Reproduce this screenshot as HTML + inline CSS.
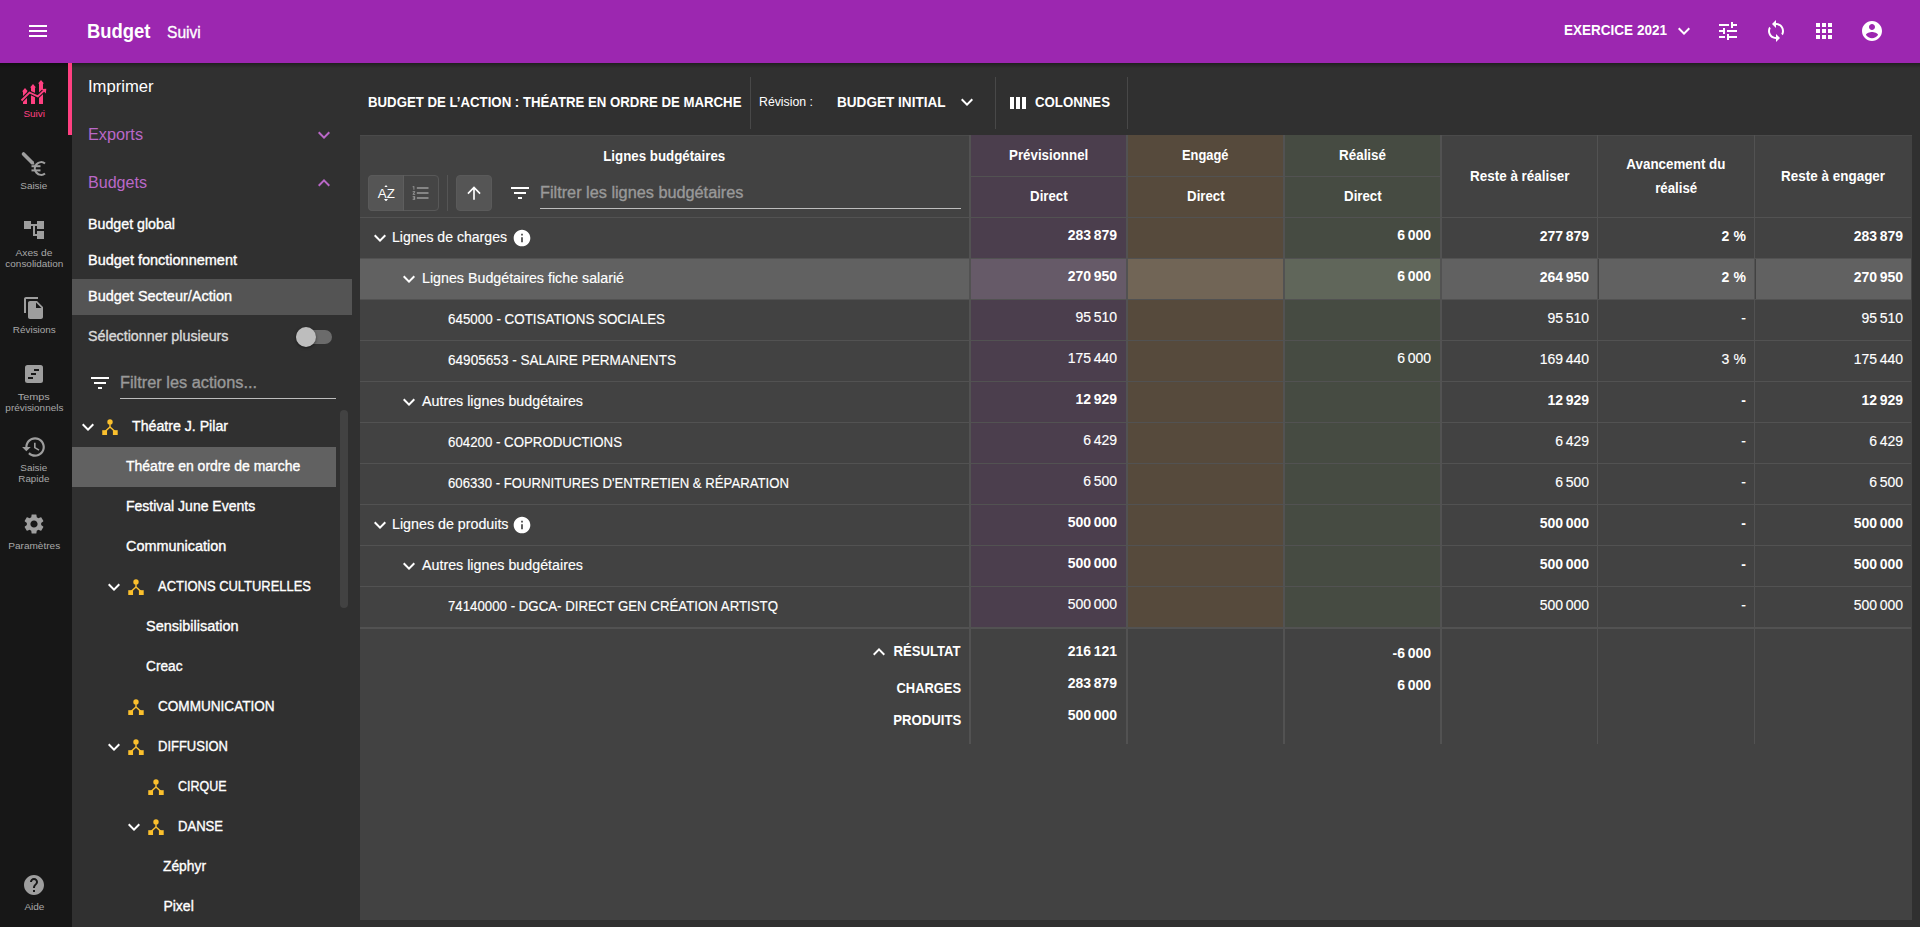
<!DOCTYPE html>
<html><head><meta charset="utf-8"><title>Budget Suivi</title>
<style>
html,body{margin:0;padding:0;width:1920px;height:927px;overflow:hidden;background:#303030;font-family:'Liberation Sans', sans-serif;}
div,svg{box-sizing:content-box}
</style></head><body>
<div style="position:relative;width:1920px;height:927px;overflow:hidden">
<div style="position:absolute;left:0px;top:0px;width:1920px;height:927px;background:#303030;"></div><div style="position:absolute;left:72px;top:62px;width:1848px;height:865px;background:#303030;"></div><div style="position:absolute;left:0px;top:62px;width:72px;height:865px;background:#171717;"></div><div style="position:absolute;left:0px;top:0px;width:1920px;height:63px;background:#9c27b0;"></div><div style="position:absolute;left:0px;top:63px;width:1920px;height:5px;background:linear-gradient(rgba(0,0,0,.35),rgba(0,0,0,0));"></div><div style="position:absolute;left:68px;top:63px;width:4px;height:72px;background:#ff4081;"></div><svg style="position:absolute;left:20px;top:78px;" width="28" height="28" viewBox="20 78 28 28" fill="#ff4081"><g fill="#ff4081"><path d="M22 91.5 L25 88 L28 91.5 L27 91.5 L27 104 L23 104 L23 91.5 Z"/><path d="M30 87.5 L33 84 L36 87.5 L35 87.5 L35 104 L31 104 L31 87.5 Z"/><path d="M38 83.5 L41 80 L44 83.5 L43 83.5 L43 104 L39 104 L39 83.5 Z"/></g><path d="M21.5 100.5 L29.5 92.5 L37.8 96.4 L44 90.5" stroke="#171717" stroke-width="4" fill="none" stroke-linejoin="round"/><path d="M21.5 100.5 L29.5 92.5 L37.8 96.4 L44 90.5" stroke="#ff4081" stroke-width="1.8" fill="none"/><path d="M41.5 89 L46.3 88.8 L45.8 93.5 Z" fill="#ff4081"/></svg><svg style="position:absolute;left:20px;top:150px;" width="28" height="28" viewBox="20 150 28 28" fill="#9e9e9e"><path d="M23.5 154 L32 162.5" stroke="#9e9e9e" stroke-width="3.6" stroke-linecap="round" fill="none"/><path d="M30.6 163.9 L33.4 161.1 L34.6 164.8 Z" fill="#9e9e9e"/><path d="M45 163.5 A6.3 6.3 0 1 0 45 173.5" stroke="#9e9e9e" stroke-width="2.2" fill="none"/><rect x="31.5" y="165.2" width="9" height="2"/><rect x="31.5" y="169.4" width="9" height="2"/></svg><svg style="position:absolute;left:22px;top:218px;" width="24" height="24" viewBox="0 0 24 24" fill="#9e9e9e"><path d="M22 11V3h-7v3H9V3H2v8h7V8h2v10h4v3h7v-8h-7v3h-2V8h2v3z"/></svg><svg style="position:absolute;left:22px;top:296px;" width="24" height="24" viewBox="0 0 24 24" fill="#9e9e9e"><path d="M16 1H4c-1.1 0-2 .9-2 2v14h2V3h12V1zm-1 4l6 6v10c0 1.1-.9 2-2 2H7.99C6.89 23 6 22.1 6 21l.01-14c0-1.1.89-2 1.99-2h7zm-1 7h5.5L14 6.5V12z"/></svg><svg style="position:absolute;left:22px;top:362px;" width="24" height="24" viewBox="0 0 24 24" fill="#9e9e9e"><rect x="3" y="3" width="18" height="18" rx="2.5" fill="#9e9e9e"/><rect x="12" y="7" width="5" height="2" fill="#171717"/><rect x="9" y="11" width="5" height="2" fill="#171717"/><rect x="6" y="15" width="5" height="2" fill="#171717"/></svg><svg style="position:absolute;left:21px;top:434px;" width="26" height="26" viewBox="0 0 24 24" fill="#9e9e9e"><path d="M13 3c-4.97 0-9 4.03-9 9H1l3.89 3.89.07.14L9 12H6c0-3.870 3.13-7 7-7s7 3.13 7 7-3.13 7-7 7c-1.93 0-3.68-.79-4.94-2.06l-1.42 1.42C8.27 19.99 10.51 21 13 21c4.97 0 9-4.03 9-9s-4.03-9-9-9zm-1 5v5l4.28 2.54.72-1.21-3.5-2.08V8H12z"/></svg><svg style="position:absolute;left:22px;top:512px;" width="24" height="24" viewBox="0 0 24 24" fill="#9e9e9e"><path d="M19.14 12.94c.04-.3.06-.61.06-.94 0-.32-.02-.64-.07-.94l2.03-1.58c.18-.14.23-.41.12-.61l-1.92-3.32c-.12-.22-.37-.29-.59-.22l-2.39.96c-.5-.38-1.03-.7-1.62-.94l-.36-2.54c-.04-.24-.24-.41-.48-.41h-3.84c-.24 0-.43.17-.47.41l-.36 2.54c-.59.24-1.13.57-1.62.94l-2.39-.96c-.22-.08-.47 0-.59.22L2.74 8.87c-.12.21-.08.47.12.61l2.03 1.58c-.05.3-.09.63-.09.94s.02.64.07.94l-2.03 1.58c-.18.14-.23.41-.12.61l1.92 3.32c.12.22.37.29.59.22l2.39-.96c.5.38 1.03.7 1.62.94l.36 2.54c.05.24.24.41.48.41h3.84c.24 0 .44-.17.47-.41l.36-2.54c.59-.24 1.13-.56 1.62-.94l2.39.96c.22.08.47 0 .59-.22l1.92-3.32c.12-.22.07-.47-.12-.61l-2.01-1.58zM12 15.6c-1.98 0-3.6-1.62-3.6-3.6s1.62-3.6 3.6-3.6 3.6 1.62 3.6 3.6-1.62 3.6-3.6 3.6z"/></svg><svg style="position:absolute;left:22px;top:873px;" width="24" height="24" viewBox="0 0 24 24" fill="#9e9e9e"><path d="M12 2C6.48 2 2 6.48 2 12s4.48 10 10 10 10-4.48 10-10S17.52 2 12 2zm1 17h-2v-2h2v2zm2.07-7.75l-.9.92C13.45 12.9 13 13.5 13 15h-2v-.5c0-1.1.45-2.1 1.17-2.83l1.24-1.26c.37-.36.59-.86.59-1.41 0-1.1-.9-2-2-2s-2 .9-2 2H8c0-2.21 1.79-4 4-4s4 1.790 4 4c0 .88-.36 1.68-.93 2.25z"/></svg><svg style="position:absolute;left:312px;top:123px;" width="24" height="24" viewBox="0 0 24 24" fill="#ba68c8"><path d="M16.59 8.59L12 13.17 7.41 8.59 6 10l6 6 6-6z"/></svg><svg style="position:absolute;left:312px;top:171px;" width="24" height="24" viewBox="0 0 24 24" fill="#ba68c8"><path d="M12 8l-6 6 1.41 1.41L12 10.83l4.59 4.58L18 14z"/></svg><div style="position:absolute;left:72px;top:279px;width:280px;height:36px;background:#545454;"></div><div style="position:absolute;left:296px;top:330px;width:36px;height:14px;background:#6b6b6b;border-radius:7px"></div><div style="position:absolute;left:295.5px;top:327px;width:20px;height:20px;background:#bdbdbd;border-radius:50%;box-shadow:0 1px 3px rgba(0,0,0,.5)"></div><svg style="position:absolute;left:88px;top:371px;" width="24" height="24" viewBox="0 0 24 24" fill="#fff"><path d="M10 18h4v-2h-4v2zM3 6v2h18V6H3zm3 7h12v-2H6v2z"/></svg><div style="position:absolute;left:120px;top:398px;width:216px;height:1px;background:#bdbdbd;"></div><div style="position:absolute;left:340px;top:410px;width:8px;height:198px;background:#424242;border-radius:4px"></div><svg style="position:absolute;left:76px;top:415px;" width="24" height="24" viewBox="0 0 24 24" fill="#fff"><path d="M16.59 8.59L12 13.17 7.41 8.59 6 10l6 6 6-6z"/></svg><svg style="position:absolute;left:101px;top:417px;" width="18" height="19" viewBox="0 0 18 19" fill="#fbc02d"><circle cx="9" cy="4.9" r="2.7"/><rect x="8.3" y="5" width="1.4" height="5.5"/><path d="M9 10 L4 14.5 M9 10 L14 14.5" stroke="#fbc02d" stroke-width="1.5" fill="none"/><rect x="1.25" y="13.2" width="4.8" height="4.8"/><rect x="11.9" y="13.2" width="4.8" height="4.8"/></svg><div style="position:absolute;left:72px;top:447px;width:264px;height:40px;background:#616161;"></div><svg style="position:absolute;left:102px;top:575px;" width="24" height="24" viewBox="0 0 24 24" fill="#fff"><path d="M16.59 8.59L12 13.17 7.41 8.59 6 10l6 6 6-6z"/></svg><svg style="position:absolute;left:127px;top:577px;" width="18" height="19" viewBox="0 0 18 19" fill="#fbc02d"><circle cx="9" cy="4.9" r="2.7"/><rect x="8.3" y="5" width="1.4" height="5.5"/><path d="M9 10 L4 14.5 M9 10 L14 14.5" stroke="#fbc02d" stroke-width="1.5" fill="none"/><rect x="1.25" y="13.2" width="4.8" height="4.8"/><rect x="11.9" y="13.2" width="4.8" height="4.8"/></svg><svg style="position:absolute;left:127px;top:697px;" width="18" height="19" viewBox="0 0 18 19" fill="#fbc02d"><circle cx="9" cy="4.9" r="2.7"/><rect x="8.3" y="5" width="1.4" height="5.5"/><path d="M9 10 L4 14.5 M9 10 L14 14.5" stroke="#fbc02d" stroke-width="1.5" fill="none"/><rect x="1.25" y="13.2" width="4.8" height="4.8"/><rect x="11.9" y="13.2" width="4.8" height="4.8"/></svg><svg style="position:absolute;left:102px;top:735px;" width="24" height="24" viewBox="0 0 24 24" fill="#fff"><path d="M16.59 8.59L12 13.17 7.41 8.59 6 10l6 6 6-6z"/></svg><svg style="position:absolute;left:127px;top:737px;" width="18" height="19" viewBox="0 0 18 19" fill="#fbc02d"><circle cx="9" cy="4.9" r="2.7"/><rect x="8.3" y="5" width="1.4" height="5.5"/><path d="M9 10 L4 14.5 M9 10 L14 14.5" stroke="#fbc02d" stroke-width="1.5" fill="none"/><rect x="1.25" y="13.2" width="4.8" height="4.8"/><rect x="11.9" y="13.2" width="4.8" height="4.8"/></svg><svg style="position:absolute;left:147px;top:777px;" width="18" height="19" viewBox="0 0 18 19" fill="#fbc02d"><circle cx="9" cy="4.9" r="2.7"/><rect x="8.3" y="5" width="1.4" height="5.5"/><path d="M9 10 L4 14.5 M9 10 L14 14.5" stroke="#fbc02d" stroke-width="1.5" fill="none"/><rect x="1.25" y="13.2" width="4.8" height="4.8"/><rect x="11.9" y="13.2" width="4.8" height="4.8"/></svg><svg style="position:absolute;left:122px;top:815px;" width="24" height="24" viewBox="0 0 24 24" fill="#fff"><path d="M16.59 8.59L12 13.17 7.41 8.59 6 10l6 6 6-6z"/></svg><svg style="position:absolute;left:147px;top:817px;" width="18" height="19" viewBox="0 0 18 19" fill="#fbc02d"><circle cx="9" cy="4.9" r="2.7"/><rect x="8.3" y="5" width="1.4" height="5.5"/><path d="M9 10 L4 14.5 M9 10 L14 14.5" stroke="#fbc02d" stroke-width="1.5" fill="none"/><rect x="1.25" y="13.2" width="4.8" height="4.8"/><rect x="11.9" y="13.2" width="4.8" height="4.8"/></svg><div style="position:absolute;left:750px;top:77px;width:1px;height:52px;background:#484848;"></div><svg style="position:absolute;left:955px;top:90px;" width="24" height="24" viewBox="0 0 24 24" fill="#fff"><path d="M16.59 8.59L12 13.17 7.41 8.59 6 10l6 6 6-6z"/></svg><div style="position:absolute;left:995px;top:77px;width:1px;height:52px;background:#484848;"></div><svg style="position:absolute;left:1010px;top:97px;" width="16" height="12" viewBox="0 0 16 12" fill="#fff"><rect x="0" y="0" width="4" height="12"/><rect x="6" y="0" width="4" height="12"/><rect x="12" y="0" width="4" height="12"/></svg><div style="position:absolute;left:1127px;top:77px;width:1px;height:52px;background:#484848;"></div><div style="position:absolute;left:360px;top:135px;width:1552px;height:785px;background:#424242;"></div><div style="position:absolute;left:360px;top:135px;width:1552px;height:1px;background:#4a4a4a;"></div><div style="position:absolute;left:971px;top:135px;width:155px;height:82px;background:#4b3e4d;"></div><div style="position:absolute;left:1128px;top:135px;width:155px;height:82px;background:#564a3c;"></div><div style="position:absolute;left:1285px;top:135px;width:155px;height:82px;background:#464b42;"></div><div style="position:absolute;left:971px;top:218px;width:155px;height:40px;background:#4b3e4d;"></div><div style="position:absolute;left:1128px;top:218px;width:155px;height:40px;background:#564a3c;"></div><div style="position:absolute;left:1285px;top:218px;width:155px;height:40px;background:#464b42;"></div><div style="position:absolute;left:360px;top:259px;width:609px;height:40px;background:#616161;"></div><div style="position:absolute;left:971px;top:259px;width:155px;height:40px;background:#665a68;"></div><div style="position:absolute;left:1128px;top:259px;width:155px;height:40px;background:#716556;"></div><div style="position:absolute;left:1285px;top:259px;width:155px;height:40px;background:#60665a;"></div><div style="position:absolute;left:1442px;top:259px;width:155px;height:40px;background:#616161;"></div><div style="position:absolute;left:1599px;top:259px;width:155px;height:40px;background:#616161;"></div><div style="position:absolute;left:1756px;top:259px;width:155px;height:40px;background:#616161;"></div><div style="position:absolute;left:971px;top:300px;width:155px;height:40px;background:#4b3e4d;"></div><div style="position:absolute;left:1128px;top:300px;width:155px;height:40px;background:#564a3c;"></div><div style="position:absolute;left:1285px;top:300px;width:155px;height:40px;background:#464b42;"></div><div style="position:absolute;left:971px;top:341px;width:155px;height:40px;background:#4b3e4d;"></div><div style="position:absolute;left:1128px;top:341px;width:155px;height:40px;background:#564a3c;"></div><div style="position:absolute;left:1285px;top:341px;width:155px;height:40px;background:#464b42;"></div><div style="position:absolute;left:971px;top:382px;width:155px;height:40px;background:#4b3e4d;"></div><div style="position:absolute;left:1128px;top:382px;width:155px;height:40px;background:#564a3c;"></div><div style="position:absolute;left:1285px;top:382px;width:155px;height:40px;background:#464b42;"></div><div style="position:absolute;left:971px;top:423px;width:155px;height:40px;background:#4b3e4d;"></div><div style="position:absolute;left:1128px;top:423px;width:155px;height:40px;background:#564a3c;"></div><div style="position:absolute;left:1285px;top:423px;width:155px;height:40px;background:#464b42;"></div><div style="position:absolute;left:971px;top:464px;width:155px;height:40px;background:#4b3e4d;"></div><div style="position:absolute;left:1128px;top:464px;width:155px;height:40px;background:#564a3c;"></div><div style="position:absolute;left:1285px;top:464px;width:155px;height:40px;background:#464b42;"></div><div style="position:absolute;left:971px;top:505px;width:155px;height:40px;background:#4b3e4d;"></div><div style="position:absolute;left:1128px;top:505px;width:155px;height:40px;background:#564a3c;"></div><div style="position:absolute;left:1285px;top:505px;width:155px;height:40px;background:#464b42;"></div><div style="position:absolute;left:971px;top:546px;width:155px;height:40px;background:#4b3e4d;"></div><div style="position:absolute;left:1128px;top:546px;width:155px;height:40px;background:#564a3c;"></div><div style="position:absolute;left:1285px;top:546px;width:155px;height:40px;background:#464b42;"></div><div style="position:absolute;left:971px;top:587px;width:155px;height:40px;background:#4b3e4d;"></div><div style="position:absolute;left:1128px;top:587px;width:155px;height:40px;background:#564a3c;"></div><div style="position:absolute;left:1285px;top:587px;width:155px;height:40px;background:#464b42;"></div><div style="position:absolute;left:971px;top:176px;width:469px;height:1px;background:#525252;"></div><div style="position:absolute;left:360px;top:217px;width:1551px;height:1px;background:#525252;"></div><div style="position:absolute;left:360px;top:258px;width:1551px;height:1px;background:#525252;"></div><div style="position:absolute;left:360px;top:299px;width:1551px;height:1px;background:#525252;"></div><div style="position:absolute;left:360px;top:340px;width:1551px;height:1px;background:#525252;"></div><div style="position:absolute;left:360px;top:381px;width:1551px;height:1px;background:#525252;"></div><div style="position:absolute;left:360px;top:422px;width:1551px;height:1px;background:#525252;"></div><div style="position:absolute;left:360px;top:463px;width:1551px;height:1px;background:#525252;"></div><div style="position:absolute;left:360px;top:504px;width:1551px;height:1px;background:#525252;"></div><div style="position:absolute;left:360px;top:545px;width:1551px;height:1px;background:#525252;"></div><div style="position:absolute;left:360px;top:586px;width:1551px;height:1px;background:#525252;"></div><div style="position:absolute;left:360px;top:627px;width:1551px;height:2px;background:#525252;"></div><div style="position:absolute;left:969px;top:135px;width:2px;height:609px;background:#525252;"></div><div style="position:absolute;left:1126px;top:135px;width:2px;height:609px;background:#525252;"></div><div style="position:absolute;left:1283px;top:135px;width:2px;height:609px;background:#525252;"></div><div style="position:absolute;left:1440px;top:135px;width:2px;height:609px;background:#525252;"></div><div style="position:absolute;left:1597px;top:135px;width:1px;height:609px;background:#525252;"></div><div style="position:absolute;left:1754px;top:135px;width:1px;height:609px;background:#525252;"></div><div style="position:absolute;left:368px;top:175px;width:71px;height:36px;background:#454545;border:1px solid #585858;box-sizing:border-box;border-radius:4px"></div><div style="position:absolute;left:368px;top:175px;width:36px;height:36px;background:#555555;border-radius:4px 0 0 4px;border:1px solid #5a5a5a;box-sizing:border-box"></div><div style="position:absolute;left:403px;top:175px;width:1px;height:36px;background:#5e5e5e;"></div><svg style="position:absolute;left:384px;top:184.5px;" width="4" height="2.5" viewBox="0 0 4 2.5" fill="#fff"><path d="M0 2.5 L2 0 L4 2.5 Z"/></svg><svg style="position:absolute;left:384px;top:198.7px;" width="4" height="2.5" viewBox="0 0 4 2.5" fill="#fff"><path d="M0 0 L2 2.5 L4 0 Z"/></svg><svg style="position:absolute;left:411px;top:183px;" width="20" height="20" viewBox="0 0 24 24" fill="#9a9a9a"><path d="M2 17h2v.5H3v1h1v.5H2v1h3v-4H2v1zm1-9h1V4H2v1h1v3zm-1 3h1.8L2 13.1v.9h3v-1H3.2L5 10.9V10H2v1zm5-6v2h14V5H7zm0 14h14v-2H7v2zm0-6h14v-2H7v2z"/></svg><div style="position:absolute;left:447px;top:175px;width:1px;height:36px;background:#555;"></div><div style="position:absolute;left:456px;top:175px;width:36px;height:36px;background:#555555;border-radius:4px;border:1px solid #5a5a5a;box-sizing:border-box"></div><svg style="position:absolute;left:464px;top:182.7px;" width="20" height="20" viewBox="0 0 24 24" fill="#fff"><path d="M4 12l1.41 1.41L11 7.830V20h2V7.83l5.58 5.59L20 12l-8-8-8 8z"/></svg><svg style="position:absolute;left:508px;top:181px;" width="24" height="24" viewBox="0 0 24 24" fill="#fff"><path d="M10 18h4v-2h-4v2zM3 6v2h18V6H3zm3 7h12v-2H6v2z"/></svg><div style="position:absolute;left:540px;top:208px;width:421px;height:1px;background:#bdbdbd;"></div><svg style="position:absolute;left:368px;top:226px;" width="24" height="24" viewBox="0 0 24 24" fill="#fff"><path d="M16.59 8.59L12 13.17 7.41 8.59 6 10l6 6 6-6z"/></svg><svg style="position:absolute;left:512px;top:228px;" width="20" height="20" viewBox="0 0 24 24" fill="#fff"><path d="M12 2C6.48 2 2 6.48 2 12s4.48 10 10 10 10-4.48 10-10S17.52 2 12 2zm1 15h-2v-6h2v6zm0-8h-2V7h2v2z"/></svg><svg style="position:absolute;left:397px;top:267px;" width="24" height="24" viewBox="0 0 24 24" fill="#fff"><path d="M16.59 8.59L12 13.17 7.41 8.59 6 10l6 6 6-6z"/></svg><svg style="position:absolute;left:397px;top:390px;" width="24" height="24" viewBox="0 0 24 24" fill="#fff"><path d="M16.59 8.59L12 13.17 7.41 8.59 6 10l6 6 6-6z"/></svg><svg style="position:absolute;left:368px;top:513px;" width="24" height="24" viewBox="0 0 24 24" fill="#fff"><path d="M16.59 8.59L12 13.17 7.41 8.59 6 10l6 6 6-6z"/></svg><svg style="position:absolute;left:512px;top:515px;" width="20" height="20" viewBox="0 0 24 24" fill="#fff"><path d="M12 2C6.48 2 2 6.48 2 12s4.48 10 10 10 10-4.48 10-10S17.52 2 12 2zm1 15h-2v-6h2v6zm0-8h-2V7h2v2z"/></svg><svg style="position:absolute;left:397px;top:554px;" width="24" height="24" viewBox="0 0 24 24" fill="#fff"><path d="M16.59 8.59L12 13.17 7.41 8.59 6 10l6 6 6-6z"/></svg><svg style="position:absolute;left:867px;top:640px;" width="24" height="24" viewBox="0 0 24 24" fill="#fff"><path d="M12 8l-6 6 1.41 1.41L12 10.83l4.59 4.58L18 14z"/></svg>
<div style="font-family:'Liberation Sans', sans-serif;font-size:20px;font-weight:700;letter-spacing:0px;white-space:pre;position:absolute;top:21.07px;line-height:20px;color:#fff;left:86.5px;transform-origin:0 0;transform:scaleX(0.9218);">Budget</div><div style="font-family:'Liberation Sans', sans-serif;font-size:17px;font-weight:400;letter-spacing:0px;white-space:pre;-webkit-text-stroke:0.35px #fff;position:absolute;top:23.61px;line-height:17px;color:#fff;left:167px;transform-origin:0 0;transform:scaleX(0.9170);">Suivi</div><div style="font-family:'Liberation Sans', sans-serif;font-size:14px;font-weight:700;letter-spacing:0px;white-space:pre;position:absolute;top:22.85px;line-height:14px;color:#fff;left:1564px;transform-origin:0 0;transform:scaleX(0.9661);">EXERCICE 2021</div><div style="font-family:'Liberation Sans', sans-serif;font-size:9.4px;font-weight:400;letter-spacing:0px;white-space:pre;position:absolute;top:109.04px;line-height:9.4px;color:#ff4081;left:23.84px;transform-origin:50% 0;transform:scaleX(1.0576);">Suivi</div><div style="font-family:'Liberation Sans', sans-serif;font-size:9.4px;font-weight:400;letter-spacing:0px;white-space:pre;position:absolute;top:181.04px;line-height:9.4px;color:#a8a8a8;left:21.23px;transform-origin:50% 0;transform:scaleX(1.0569);">Saisie</div><div style="font-family:'Liberation Sans', sans-serif;font-size:9.4px;font-weight:400;letter-spacing:0px;white-space:pre;position:absolute;top:248.04px;line-height:9.4px;color:#a8a8a8;left:17.06px;transform-origin:50% 0;transform:scaleX(1.0923);">Axes de</div><div style="font-family:'Liberation Sans', sans-serif;font-size:9.4px;font-weight:400;letter-spacing:0px;white-space:pre;position:absolute;top:259.04px;line-height:9.4px;color:#a8a8a8;left:6.63px;transform-origin:50% 0;transform:scaleX(1.0597);">consolidation</div><div style="font-family:'Liberation Sans', sans-serif;font-size:9.4px;font-weight:400;letter-spacing:0px;white-space:pre;position:absolute;top:325.04px;line-height:9.4px;color:#a8a8a8;left:13.68px;transform-origin:50% 0;transform:scaleX(1.0581);">Révisions</div><div style="font-family:'Liberation Sans', sans-serif;font-size:9.4px;font-weight:400;letter-spacing:0px;white-space:pre;position:absolute;top:392.04px;line-height:9.4px;color:#a8a8a8;left:20.19px;transform-origin:50% 0;transform:scaleX(1.1584);">Temps</div><div style="font-family:'Liberation Sans', sans-serif;font-size:9.4px;font-weight:400;letter-spacing:0px;white-space:pre;position:absolute;top:403.04px;line-height:9.4px;color:#a8a8a8;left:6.64px;transform-origin:50% 0;transform:scaleX(1.0600);">prévisionnels</div><div style="font-family:'Liberation Sans', sans-serif;font-size:9.4px;font-weight:400;letter-spacing:0px;white-space:pre;position:absolute;top:463.04px;line-height:9.4px;color:#a8a8a8;left:21.23px;transform-origin:50% 0;transform:scaleX(1.0569);">Saisie</div><div style="font-family:'Liberation Sans', sans-serif;font-size:9.4px;font-weight:400;letter-spacing:0px;white-space:pre;position:absolute;top:474.04px;line-height:9.4px;color:#a8a8a8;left:19.14px;transform-origin:50% 0;transform:scaleX(1.0431);">Rapide</div><div style="font-family:'Liberation Sans', sans-serif;font-size:9.4px;font-weight:400;letter-spacing:0px;white-space:pre;position:absolute;top:541.04px;line-height:9.4px;color:#a8a8a8;left:9.77px;transform-origin:50% 0;transform:scaleX(1.0729);">Paramètres</div><div style="font-family:'Liberation Sans', sans-serif;font-size:9.4px;font-weight:400;letter-spacing:0px;white-space:pre;position:absolute;top:902.04px;line-height:9.4px;color:#a8a8a8;left:24.62px;transform-origin:50% 0;transform:scaleX(1.0658);">Aide</div><div style="font-family:'Liberation Sans', sans-serif;font-size:16px;font-weight:400;letter-spacing:0px;white-space:pre;position:absolute;top:79.46px;line-height:16px;color:#fff;left:88px;transform-origin:0 0;transform:scaleX(1.0379);">Imprimer</div><div style="font-family:'Liberation Sans', sans-serif;font-size:16px;font-weight:400;letter-spacing:0px;white-space:pre;position:absolute;top:127.46px;line-height:16px;color:#ba68c8;left:88px;transform-origin:0 0;transform:scaleX(1.0138);">Exports</div><div style="font-family:'Liberation Sans', sans-serif;font-size:16px;font-weight:400;letter-spacing:0px;white-space:pre;position:absolute;top:175.46px;line-height:16px;color:#ba68c8;left:88px;transform-origin:0 0;transform:scaleX(1.0048);">Budgets</div><div style="font-family:'Liberation Sans', sans-serif;font-size:14px;font-weight:400;letter-spacing:0px;white-space:pre;-webkit-text-stroke:0.35px #fff;position:absolute;top:217.15px;line-height:14px;color:#fff;left:88px;transform-origin:0 0;transform:scaleX(1.0159);">Budget global</div><div style="font-family:'Liberation Sans', sans-serif;font-size:14px;font-weight:400;letter-spacing:0px;white-space:pre;-webkit-text-stroke:0.35px #fff;position:absolute;top:253.15px;line-height:14px;color:#fff;left:88px;transform-origin:0 0;transform:scaleX(1.0347);">Budget fonctionnement</div><div style="font-family:'Liberation Sans', sans-serif;font-size:14px;font-weight:400;letter-spacing:0px;white-space:pre;-webkit-text-stroke:0.35px #fff;position:absolute;top:289.15px;line-height:14px;color:#fff;left:88px;transform-origin:0 0;transform:scaleX(1.0336);">Budget Secteur/Action</div><div style="font-family:'Liberation Sans', sans-serif;font-size:14px;font-weight:400;letter-spacing:0px;white-space:pre;-webkit-text-stroke:0.35px #d9d9d9;position:absolute;top:329.15px;line-height:14px;color:#d9d9d9;left:88px;transform-origin:0 0;transform:scaleX(1.0200);">Sélectionner plusieurs</div><div style="font-family:'Liberation Sans', sans-serif;font-size:16px;font-weight:400;letter-spacing:0px;white-space:pre;-webkit-text-stroke:0.35px #999999;position:absolute;top:375.46px;line-height:16px;color:#999999;left:120px;transform-origin:0 0;transform:scaleX(1.0204);">Filtrer les actions...</div><div style="font-family:'Liberation Sans', sans-serif;font-size:14px;font-weight:400;letter-spacing:0px;white-space:pre;-webkit-text-stroke:0.35px #fff;position:absolute;top:419.15px;line-height:14px;color:#fff;left:131.5px;transform-origin:0 0;transform:scaleX(1.0112);">Théatre J. Pilar</div><div style="font-family:'Liberation Sans', sans-serif;font-size:14px;font-weight:400;letter-spacing:0px;white-space:pre;-webkit-text-stroke:0.35px #fff;position:absolute;top:459.15px;line-height:14px;color:#fff;left:126px;transform-origin:0 0;">Théatre en ordre de marche</div><div style="font-family:'Liberation Sans', sans-serif;font-size:14px;font-weight:400;letter-spacing:0px;white-space:pre;-webkit-text-stroke:0.35px #fff;position:absolute;top:499.15px;line-height:14px;color:#fff;left:126px;transform-origin:0 0;">Festival June Events</div><div style="font-family:'Liberation Sans', sans-serif;font-size:14px;font-weight:400;letter-spacing:0px;white-space:pre;-webkit-text-stroke:0.35px #fff;position:absolute;top:539.15px;line-height:14px;color:#fff;left:126px;transform-origin:0 0;transform:scaleX(1.0312);">Communication</div><div style="font-family:'Liberation Sans', sans-serif;font-size:14px;font-weight:400;letter-spacing:0px;white-space:pre;-webkit-text-stroke:0.35px #fff;position:absolute;top:579.15px;line-height:14px;color:#fff;left:157.6px;transform-origin:0 0;transform:scaleX(0.9247);">ACTIONS CULTURELLES</div><div style="font-family:'Liberation Sans', sans-serif;font-size:14px;font-weight:400;letter-spacing:0px;white-space:pre;-webkit-text-stroke:0.35px #fff;position:absolute;top:619.15px;line-height:14px;color:#fff;left:146.4px;transform-origin:0 0;transform:scaleX(1.0346);">Sensibilisation</div><div style="font-family:'Liberation Sans', sans-serif;font-size:14px;font-weight:400;letter-spacing:0px;white-space:pre;-webkit-text-stroke:0.35px #fff;position:absolute;top:659.15px;line-height:14px;color:#fff;left:146.4px;transform-origin:0 0;transform:scaleX(0.9770);">Creac</div><div style="font-family:'Liberation Sans', sans-serif;font-size:14px;font-weight:400;letter-spacing:0px;white-space:pre;-webkit-text-stroke:0.35px #fff;position:absolute;top:699.15px;line-height:14px;color:#fff;left:157.8px;transform-origin:0 0;transform:scaleX(0.9693);">COMMUNICATION</div><div style="font-family:'Liberation Sans', sans-serif;font-size:14px;font-weight:400;letter-spacing:0px;white-space:pre;-webkit-text-stroke:0.35px #fff;position:absolute;top:739.15px;line-height:14px;color:#fff;left:157.8px;transform-origin:0 0;transform:scaleX(0.9277);">DIFFUSION</div><div style="font-family:'Liberation Sans', sans-serif;font-size:14px;font-weight:400;letter-spacing:0px;white-space:pre;-webkit-text-stroke:0.35px #fff;position:absolute;top:779.15px;line-height:14px;color:#fff;left:178px;transform-origin:0 0;transform:scaleX(0.8907);">CIRQUE</div><div style="font-family:'Liberation Sans', sans-serif;font-size:14px;font-weight:400;letter-spacing:0px;white-space:pre;-webkit-text-stroke:0.35px #fff;position:absolute;top:819.15px;line-height:14px;color:#fff;left:178px;transform-origin:0 0;transform:scaleX(0.9329);">DANSE</div><div style="font-family:'Liberation Sans', sans-serif;font-size:14px;font-weight:400;letter-spacing:0px;white-space:pre;-webkit-text-stroke:0.35px #fff;position:absolute;top:859.15px;line-height:14px;color:#fff;left:163.4px;transform-origin:0 0;transform:scaleX(0.9867);">Zéphyr</div><div style="font-family:'Liberation Sans', sans-serif;font-size:14px;font-weight:400;letter-spacing:0px;white-space:pre;-webkit-text-stroke:0.35px #fff;position:absolute;top:899.15px;line-height:14px;color:#fff;left:163.4px;transform-origin:0 0;">Pixel</div><div style="font-family:'Liberation Sans', sans-serif;font-size:14px;font-weight:700;letter-spacing:0px;white-space:pre;position:absolute;top:94.65px;line-height:14px;color:#fff;left:368px;transform-origin:0 0;transform:scaleX(0.9440);">BUDGET DE L’ACTION : THÉATRE EN ORDRE DE MARCHE</div><div style="font-family:'Liberation Sans', sans-serif;font-size:12px;font-weight:400;letter-spacing:0px;white-space:pre;position:absolute;top:95.84px;line-height:12px;color:#fff;left:759px;transform-origin:0 0;transform:scaleX(1.0249);">Révision :</div><div style="font-family:'Liberation Sans', sans-serif;font-size:14px;font-weight:700;letter-spacing:0px;white-space:pre;position:absolute;top:94.65px;line-height:14px;color:#fff;left:837.4px;transform-origin:0 0;transform:scaleX(0.9696);">BUDGET INITIAL</div><div style="font-family:'Liberation Sans', sans-serif;font-size:14px;font-weight:700;letter-spacing:0px;white-space:pre;position:absolute;top:94.65px;line-height:14px;color:#fff;left:1035px;transform-origin:0 0;transform:scaleX(0.9453);">COLONNES</div><div style="font-family:'Liberation Sans', sans-serif;font-size:14px;font-weight:700;letter-spacing:0px;white-space:pre;position:absolute;top:149.15px;line-height:14px;color:#fff;left:600.32px;transform-origin:50% 0;transform:scaleX(0.9505);">Lignes budgétaires</div><div style="font-family:'Liberation Sans', sans-serif;font-size:14px;font-weight:700;letter-spacing:0px;white-space:pre;position:absolute;top:147.85px;line-height:14px;color:#fff;left:1006.87px;transform-origin:50% 0;transform:scaleX(0.9524);">Prévisionnel</div><div style="font-family:'Liberation Sans', sans-serif;font-size:14px;font-weight:700;letter-spacing:0px;white-space:pre;position:absolute;top:189.15px;line-height:14px;color:#fff;left:1028.66px;transform-origin:50% 0;transform:scaleX(0.9449);">Direct</div><div style="font-family:'Liberation Sans', sans-serif;font-size:14px;font-weight:700;letter-spacing:0px;white-space:pre;position:absolute;top:147.85px;line-height:14px;color:#fff;left:1180.21px;transform-origin:50% 0;transform:scaleX(0.9194);">Engagé</div><div style="font-family:'Liberation Sans', sans-serif;font-size:14px;font-weight:700;letter-spacing:0px;white-space:pre;position:absolute;top:189.15px;line-height:14px;color:#fff;left:1185.66px;transform-origin:50% 0;transform:scaleX(0.9449);">Direct</div><div style="font-family:'Liberation Sans', sans-serif;font-size:14px;font-weight:700;letter-spacing:0px;white-space:pre;position:absolute;top:147.85px;line-height:14px;color:#fff;left:1337.98px;transform-origin:50% 0;transform:scaleX(0.9583);">Réalisé</div><div style="font-family:'Liberation Sans', sans-serif;font-size:14px;font-weight:700;letter-spacing:0px;white-space:pre;position:absolute;top:189.15px;line-height:14px;color:#fff;left:1342.66px;transform-origin:50% 0;transform:scaleX(0.9449);">Direct</div><div style="font-family:'Liberation Sans', sans-serif;font-size:14px;font-weight:700;letter-spacing:0px;white-space:pre;position:absolute;top:168.85px;line-height:14px;color:#fff;left:1467.73px;transform-origin:50% 0;transform:scaleX(0.9611);">Reste à réaliser</div><div style="font-family:'Liberation Sans', sans-serif;font-size:14px;font-weight:700;letter-spacing:0px;white-space:pre;position:absolute;top:157.15px;line-height:14px;color:#fff;left:1624.13px;transform-origin:50% 0;transform:scaleX(0.9544);">Avancement du</div><div style="font-family:'Liberation Sans', sans-serif;font-size:14px;font-weight:700;letter-spacing:0px;white-space:pre;position:absolute;top:180.75px;line-height:14px;color:#fff;left:1653.81px;transform-origin:50% 0;transform:scaleX(0.9465);">réalisé</div><div style="font-family:'Liberation Sans', sans-serif;font-size:14px;font-weight:700;letter-spacing:0px;white-space:pre;position:absolute;top:168.85px;line-height:14px;color:#fff;left:1779.41px;transform-origin:50% 0;transform:scaleX(0.9614);">Reste à engager</div><div style="font-family:'Liberation Sans', sans-serif;font-size:13px;font-weight:400;letter-spacing:0px;white-space:pre;position:absolute;top:187.00px;line-height:13px;color:#fff;left:377.69px;transform-origin:50% 0;transform:scaleX(1.0226);">AZ</div><div style="font-family:'Liberation Sans', sans-serif;font-size:16px;font-weight:400;letter-spacing:0px;white-space:pre;-webkit-text-stroke:0.35px #999999;position:absolute;top:185.16px;line-height:16px;color:#999999;left:540.4px;transform-origin:0 0;transform:scaleX(1.0165);">Filtrer les lignes budgétaires</div><div style="font-family:'Liberation Sans', sans-serif;font-size:14px;font-weight:400;letter-spacing:0px;white-space:pre;-webkit-text-stroke:0.15px #fff;position:absolute;top:230.15px;line-height:14px;color:#fff;left:392px;transform-origin:0 0;transform:scaleX(1.0051);">Lignes de charges</div><div style="font-family:'Liberation Sans', sans-serif;font-size:14px;font-weight:400;letter-spacing:0px;white-space:pre;-webkit-text-stroke:0.15px #fff;position:absolute;top:271.15px;line-height:14px;color:#fff;left:421.5px;transform-origin:0 0;transform:scaleX(1.0178);">Lignes Budgétaires fiche salarié</div><div style="font-family:'Liberation Sans', sans-serif;font-size:14px;font-weight:400;letter-spacing:0px;white-space:pre;-webkit-text-stroke:0.15px #fff;position:absolute;top:312.15px;line-height:14px;color:#fff;left:447.5px;transform-origin:0 0;transform:scaleX(0.9562);">645000 - COTISATIONS SOCIALES</div><div style="font-family:'Liberation Sans', sans-serif;font-size:14px;font-weight:400;letter-spacing:0px;white-space:pre;-webkit-text-stroke:0.15px #fff;position:absolute;top:353.15px;line-height:14px;color:#fff;left:447.5px;transform-origin:0 0;transform:scaleX(0.9702);">64905653 - SALAIRE PERMANENTS</div><div style="font-family:'Liberation Sans', sans-serif;font-size:14px;font-weight:400;letter-spacing:0px;white-space:pre;-webkit-text-stroke:0.15px #fff;position:absolute;top:394.15px;line-height:14px;color:#fff;left:421.5px;transform-origin:0 0;transform:scaleX(1.0190);">Autres lignes budgétaires</div><div style="font-family:'Liberation Sans', sans-serif;font-size:14px;font-weight:400;letter-spacing:0px;white-space:pre;-webkit-text-stroke:0.15px #fff;position:absolute;top:435.15px;line-height:14px;color:#fff;left:447.5px;transform-origin:0 0;transform:scaleX(0.9477);">604200 - COPRODUCTIONS</div><div style="font-family:'Liberation Sans', sans-serif;font-size:14px;font-weight:400;letter-spacing:0px;white-space:pre;-webkit-text-stroke:0.15px #fff;position:absolute;top:476.15px;line-height:14px;color:#fff;left:447.5px;transform-origin:0 0;transform:scaleX(0.9411);">606330 - FOURNITURES D&#x27;ENTRETIEN &amp; RÉPARATION</div><div style="font-family:'Liberation Sans', sans-serif;font-size:14px;font-weight:400;letter-spacing:0px;white-space:pre;-webkit-text-stroke:0.15px #fff;position:absolute;top:517.15px;line-height:14px;color:#fff;left:392px;transform-origin:0 0;transform:scaleX(1.0182);">Lignes de produits</div><div style="font-family:'Liberation Sans', sans-serif;font-size:14px;font-weight:400;letter-spacing:0px;white-space:pre;-webkit-text-stroke:0.15px #fff;position:absolute;top:558.15px;line-height:14px;color:#fff;left:421.5px;transform-origin:0 0;transform:scaleX(1.0190);">Autres lignes budgétaires</div><div style="font-family:'Liberation Sans', sans-serif;font-size:14px;font-weight:400;letter-spacing:0px;white-space:pre;-webkit-text-stroke:0.15px #fff;position:absolute;top:599.15px;line-height:14px;color:#fff;left:447.5px;transform-origin:0 0;transform:scaleX(0.9468);">74140000 - DGCA- DIRECT GEN CRÉATION ARTISTQ</div><div style="font-family:'Liberation Sans', sans-serif;font-size:14px;font-weight:700;letter-spacing:0px;white-space:pre;position:absolute;top:643.85px;line-height:14px;color:#fff;left:889.45px;transform-origin:100% 0;transform:scaleX(0.9364);">RÉSULTAT</div><div style="font-family:'Liberation Sans', sans-serif;font-size:14px;font-weight:700;letter-spacing:0px;white-space:pre;position:absolute;top:681.15px;line-height:14px;color:#fff;left:890.98px;transform-origin:100% 0;transform:scaleX(0.9212);">CHARGES</div><div style="font-family:'Liberation Sans', sans-serif;font-size:14px;font-weight:700;letter-spacing:0px;white-space:pre;position:absolute;top:713.15px;line-height:14px;color:#fff;left:888.66px;transform-origin:100% 0;transform:scaleX(0.9400);">PRODUITS</div>
<div style="position:absolute;left:0;top:0;width:1920px;height:927px;z-index:3"><div style="position:absolute;left:29px;top:25px;width:18px;height:2px;background:#fff"></div><div style="position:absolute;left:29px;top:30px;width:18px;height:2px;background:#fff"></div><div style="position:absolute;left:29px;top:35px;width:18px;height:2px;background:#fff"></div><svg style="position:absolute;left:1672px;top:19px;" width="24" height="24" viewBox="0 0 24 24" fill="#fff"><path d="M16.59 8.59L12 13.17 7.41 8.59 6 10l6 6 6-6z"/></svg><svg style="position:absolute;left:1716px;top:19px;" width="24" height="24" viewBox="0 0 24 24" fill="#fff"><path d="M3 17v2h6v-2H3zM3 5v2h10V5H3zm10 16v-2h8v-2h-8v-2h-2v6h2zM7 9v2H3v2h4v2h2V9H7zm14 4v-2H11v2h10zm-6-4h2V7h4V5h-4V3h-2v6z"/></svg><svg style="position:absolute;left:1764px;top:19px;" width="24" height="24" viewBox="0 0 24 24" fill="#fff"><path d="M12 4V1L8 5l4 4V6c3.31 0 6 2.69 6 6 0 1.010-.25 1.97-.7 2.8l1.46 1.46C19.54 15.03 20 13.57 20 12c0-4.42-3.58-8-8-8zm0 14c-3.31 0-6-2.69-6-6 0-1.01.25-1.97.7-2.8L5.24 7.74C4.46 8.97 4 10.43 4 12c0 4.42 3.58 8 8 8v3l4-4-4-4v3z"/></svg><svg style="position:absolute;left:1812px;top:19px;" width="24" height="24" viewBox="0 0 24 24" fill="#fff"><path d="M4 8h4V4H4v4zm6 12h4v-4h-4v4zm-6 0h4v-4H4v4zm0-6h4v-4H4v4zm6 0h4v-4h-4v4zm6-10v4h4V4h-4zm-6 4h4V4h-4v4zm6 6h4v-4h-4v4zm0 6h4v-4h-4v4z"/></svg><svg style="position:absolute;left:1860px;top:19px;" width="24" height="24" viewBox="0 0 24 24" fill="#fff"><path d="M12 2C6.48 2 2 6.48 2 12s4.48 10 10 10 10-4.48 10-10S17.52 2 12 2zm0 3c1.66 0 3 1.34 3 3s-1.34 3-3 3-3-1.34-3-3 1.34-3 3-3zm0 14.2c-2.5 0-4.71-1.28-6-3.22.03-1.99 4-3.080 6-3.08 1.99 0 5.97 1.09 6 3.08-1.29 1.94-3.5 3.22-6 3.22z"/></svg><div style="position:absolute;right:803px;top:228.15px;line-height:14px;font-size:14px;font-weight:700;color:#fff;white-space:pre;text-align:right;font-family:'Liberation Sans', sans-serif">283<span style="margin-left:2.6px">879</span></div><div style="position:absolute;right:489px;top:228.15px;line-height:14px;font-size:14px;font-weight:700;color:#fff;white-space:pre;text-align:right;font-family:'Liberation Sans', sans-serif">6<span style="margin-left:2.6px">000</span></div><div style="position:absolute;right:331px;top:229.15px;line-height:14px;font-size:14px;font-weight:700;color:#fff;white-space:pre;text-align:right;font-family:'Liberation Sans', sans-serif">277<span style="margin-left:2.6px">879</span></div><div style="position:absolute;right:174px;top:229.15px;line-height:14px;font-size:14px;font-weight:700;color:#fff;white-space:pre;text-align:right;font-family:'Liberation Sans', sans-serif">2<span style="margin-left:4.2px">%</span></div><div style="position:absolute;right:17px;top:229.15px;line-height:14px;font-size:14px;font-weight:700;color:#fff;white-space:pre;text-align:right;font-family:'Liberation Sans', sans-serif">283<span style="margin-left:2.6px">879</span></div><div style="position:absolute;right:803px;top:269.15px;line-height:14px;font-size:14px;font-weight:700;color:#fff;white-space:pre;text-align:right;font-family:'Liberation Sans', sans-serif">270<span style="margin-left:2.6px">950</span></div><div style="position:absolute;right:489px;top:269.15px;line-height:14px;font-size:14px;font-weight:700;color:#fff;white-space:pre;text-align:right;font-family:'Liberation Sans', sans-serif">6<span style="margin-left:2.6px">000</span></div><div style="position:absolute;right:331px;top:270.15px;line-height:14px;font-size:14px;font-weight:700;color:#fff;white-space:pre;text-align:right;font-family:'Liberation Sans', sans-serif">264<span style="margin-left:2.6px">950</span></div><div style="position:absolute;right:174px;top:270.15px;line-height:14px;font-size:14px;font-weight:700;color:#fff;white-space:pre;text-align:right;font-family:'Liberation Sans', sans-serif">2<span style="margin-left:4.2px">%</span></div><div style="position:absolute;right:17px;top:270.15px;line-height:14px;font-size:14px;font-weight:700;color:#fff;white-space:pre;text-align:right;font-family:'Liberation Sans', sans-serif">270<span style="margin-left:2.6px">950</span></div><div style="position:absolute;right:803px;top:310.15px;line-height:14px;font-size:14px;font-weight:400;color:#fff;-webkit-text-stroke:0.15px #fff;white-space:pre;text-align:right;font-family:'Liberation Sans', sans-serif">95<span style="margin-left:2.6px">510</span></div><div style="position:absolute;right:331px;top:311.15px;line-height:14px;font-size:14px;font-weight:400;color:#fff;-webkit-text-stroke:0.15px #fff;white-space:pre;text-align:right;font-family:'Liberation Sans', sans-serif">95<span style="margin-left:2.6px">510</span></div><div style="position:absolute;right:174px;top:311.15px;line-height:14px;font-size:14px;font-weight:400;color:#fff;-webkit-text-stroke:0.15px #fff;white-space:pre;text-align:right;font-family:'Liberation Sans', sans-serif">-</div><div style="position:absolute;right:17px;top:311.15px;line-height:14px;font-size:14px;font-weight:400;color:#fff;-webkit-text-stroke:0.15px #fff;white-space:pre;text-align:right;font-family:'Liberation Sans', sans-serif">95<span style="margin-left:2.6px">510</span></div><div style="position:absolute;right:803px;top:351.15px;line-height:14px;font-size:14px;font-weight:400;color:#fff;-webkit-text-stroke:0.15px #fff;white-space:pre;text-align:right;font-family:'Liberation Sans', sans-serif">175<span style="margin-left:2.6px">440</span></div><div style="position:absolute;right:489px;top:351.15px;line-height:14px;font-size:14px;font-weight:400;color:#fff;-webkit-text-stroke:0.15px #fff;white-space:pre;text-align:right;font-family:'Liberation Sans', sans-serif">6<span style="margin-left:2.6px">000</span></div><div style="position:absolute;right:331px;top:352.15px;line-height:14px;font-size:14px;font-weight:400;color:#fff;-webkit-text-stroke:0.15px #fff;white-space:pre;text-align:right;font-family:'Liberation Sans', sans-serif">169<span style="margin-left:2.6px">440</span></div><div style="position:absolute;right:174px;top:352.15px;line-height:14px;font-size:14px;font-weight:400;color:#fff;-webkit-text-stroke:0.15px #fff;white-space:pre;text-align:right;font-family:'Liberation Sans', sans-serif">3<span style="margin-left:4.2px">%</span></div><div style="position:absolute;right:17px;top:352.15px;line-height:14px;font-size:14px;font-weight:400;color:#fff;-webkit-text-stroke:0.15px #fff;white-space:pre;text-align:right;font-family:'Liberation Sans', sans-serif">175<span style="margin-left:2.6px">440</span></div><div style="position:absolute;right:803px;top:392.15px;line-height:14px;font-size:14px;font-weight:700;color:#fff;white-space:pre;text-align:right;font-family:'Liberation Sans', sans-serif">12<span style="margin-left:2.6px">929</span></div><div style="position:absolute;right:331px;top:393.15px;line-height:14px;font-size:14px;font-weight:700;color:#fff;white-space:pre;text-align:right;font-family:'Liberation Sans', sans-serif">12<span style="margin-left:2.6px">929</span></div><div style="position:absolute;right:174px;top:393.15px;line-height:14px;font-size:14px;font-weight:700;color:#fff;white-space:pre;text-align:right;font-family:'Liberation Sans', sans-serif">-</div><div style="position:absolute;right:17px;top:393.15px;line-height:14px;font-size:14px;font-weight:700;color:#fff;white-space:pre;text-align:right;font-family:'Liberation Sans', sans-serif">12<span style="margin-left:2.6px">929</span></div><div style="position:absolute;right:803px;top:433.15px;line-height:14px;font-size:14px;font-weight:400;color:#fff;-webkit-text-stroke:0.15px #fff;white-space:pre;text-align:right;font-family:'Liberation Sans', sans-serif">6<span style="margin-left:2.6px">429</span></div><div style="position:absolute;right:331px;top:434.15px;line-height:14px;font-size:14px;font-weight:400;color:#fff;-webkit-text-stroke:0.15px #fff;white-space:pre;text-align:right;font-family:'Liberation Sans', sans-serif">6<span style="margin-left:2.6px">429</span></div><div style="position:absolute;right:174px;top:434.15px;line-height:14px;font-size:14px;font-weight:400;color:#fff;-webkit-text-stroke:0.15px #fff;white-space:pre;text-align:right;font-family:'Liberation Sans', sans-serif">-</div><div style="position:absolute;right:17px;top:434.15px;line-height:14px;font-size:14px;font-weight:400;color:#fff;-webkit-text-stroke:0.15px #fff;white-space:pre;text-align:right;font-family:'Liberation Sans', sans-serif">6<span style="margin-left:2.6px">429</span></div><div style="position:absolute;right:803px;top:474.15px;line-height:14px;font-size:14px;font-weight:400;color:#fff;-webkit-text-stroke:0.15px #fff;white-space:pre;text-align:right;font-family:'Liberation Sans', sans-serif">6<span style="margin-left:2.6px">500</span></div><div style="position:absolute;right:331px;top:475.15px;line-height:14px;font-size:14px;font-weight:400;color:#fff;-webkit-text-stroke:0.15px #fff;white-space:pre;text-align:right;font-family:'Liberation Sans', sans-serif">6<span style="margin-left:2.6px">500</span></div><div style="position:absolute;right:174px;top:475.15px;line-height:14px;font-size:14px;font-weight:400;color:#fff;-webkit-text-stroke:0.15px #fff;white-space:pre;text-align:right;font-family:'Liberation Sans', sans-serif">-</div><div style="position:absolute;right:17px;top:475.15px;line-height:14px;font-size:14px;font-weight:400;color:#fff;-webkit-text-stroke:0.15px #fff;white-space:pre;text-align:right;font-family:'Liberation Sans', sans-serif">6<span style="margin-left:2.6px">500</span></div><div style="position:absolute;right:803px;top:515.15px;line-height:14px;font-size:14px;font-weight:700;color:#fff;white-space:pre;text-align:right;font-family:'Liberation Sans', sans-serif">500<span style="margin-left:2.6px">000</span></div><div style="position:absolute;right:331px;top:516.15px;line-height:14px;font-size:14px;font-weight:700;color:#fff;white-space:pre;text-align:right;font-family:'Liberation Sans', sans-serif">500<span style="margin-left:2.6px">000</span></div><div style="position:absolute;right:174px;top:516.15px;line-height:14px;font-size:14px;font-weight:700;color:#fff;white-space:pre;text-align:right;font-family:'Liberation Sans', sans-serif">-</div><div style="position:absolute;right:17px;top:516.15px;line-height:14px;font-size:14px;font-weight:700;color:#fff;white-space:pre;text-align:right;font-family:'Liberation Sans', sans-serif">500<span style="margin-left:2.6px">000</span></div><div style="position:absolute;right:803px;top:556.15px;line-height:14px;font-size:14px;font-weight:700;color:#fff;white-space:pre;text-align:right;font-family:'Liberation Sans', sans-serif">500<span style="margin-left:2.6px">000</span></div><div style="position:absolute;right:331px;top:557.15px;line-height:14px;font-size:14px;font-weight:700;color:#fff;white-space:pre;text-align:right;font-family:'Liberation Sans', sans-serif">500<span style="margin-left:2.6px">000</span></div><div style="position:absolute;right:174px;top:557.15px;line-height:14px;font-size:14px;font-weight:700;color:#fff;white-space:pre;text-align:right;font-family:'Liberation Sans', sans-serif">-</div><div style="position:absolute;right:17px;top:557.15px;line-height:14px;font-size:14px;font-weight:700;color:#fff;white-space:pre;text-align:right;font-family:'Liberation Sans', sans-serif">500<span style="margin-left:2.6px">000</span></div><div style="position:absolute;right:803px;top:597.15px;line-height:14px;font-size:14px;font-weight:400;color:#fff;-webkit-text-stroke:0.15px #fff;white-space:pre;text-align:right;font-family:'Liberation Sans', sans-serif">500<span style="margin-left:2.6px">000</span></div><div style="position:absolute;right:331px;top:598.15px;line-height:14px;font-size:14px;font-weight:400;color:#fff;-webkit-text-stroke:0.15px #fff;white-space:pre;text-align:right;font-family:'Liberation Sans', sans-serif">500<span style="margin-left:2.6px">000</span></div><div style="position:absolute;right:174px;top:598.15px;line-height:14px;font-size:14px;font-weight:400;color:#fff;-webkit-text-stroke:0.15px #fff;white-space:pre;text-align:right;font-family:'Liberation Sans', sans-serif">-</div><div style="position:absolute;right:17px;top:598.15px;line-height:14px;font-size:14px;font-weight:400;color:#fff;-webkit-text-stroke:0.15px #fff;white-space:pre;text-align:right;font-family:'Liberation Sans', sans-serif">500<span style="margin-left:2.6px">000</span></div><div style="position:absolute;right:803px;top:644.15px;line-height:14px;font-size:14px;font-weight:700;color:#fff;white-space:pre;text-align:right;font-family:'Liberation Sans', sans-serif">216<span style="margin-left:2.6px">121</span></div><div style="position:absolute;right:803px;top:676.15px;line-height:14px;font-size:14px;font-weight:700;color:#fff;white-space:pre;text-align:right;font-family:'Liberation Sans', sans-serif">283<span style="margin-left:2.6px">879</span></div><div style="position:absolute;right:803px;top:708.15px;line-height:14px;font-size:14px;font-weight:700;color:#fff;white-space:pre;text-align:right;font-family:'Liberation Sans', sans-serif">500<span style="margin-left:2.6px">000</span></div><div style="position:absolute;right:489px;top:646.15px;line-height:14px;font-size:14px;font-weight:700;color:#fff;white-space:pre;text-align:right;font-family:'Liberation Sans', sans-serif">-6<span style="margin-left:2.6px">000</span></div><div style="position:absolute;right:489px;top:678.15px;line-height:14px;font-size:14px;font-weight:700;color:#fff;white-space:pre;text-align:right;font-family:'Liberation Sans', sans-serif">6<span style="margin-left:2.6px">000</span></div></div>
</div>
</body></html>
